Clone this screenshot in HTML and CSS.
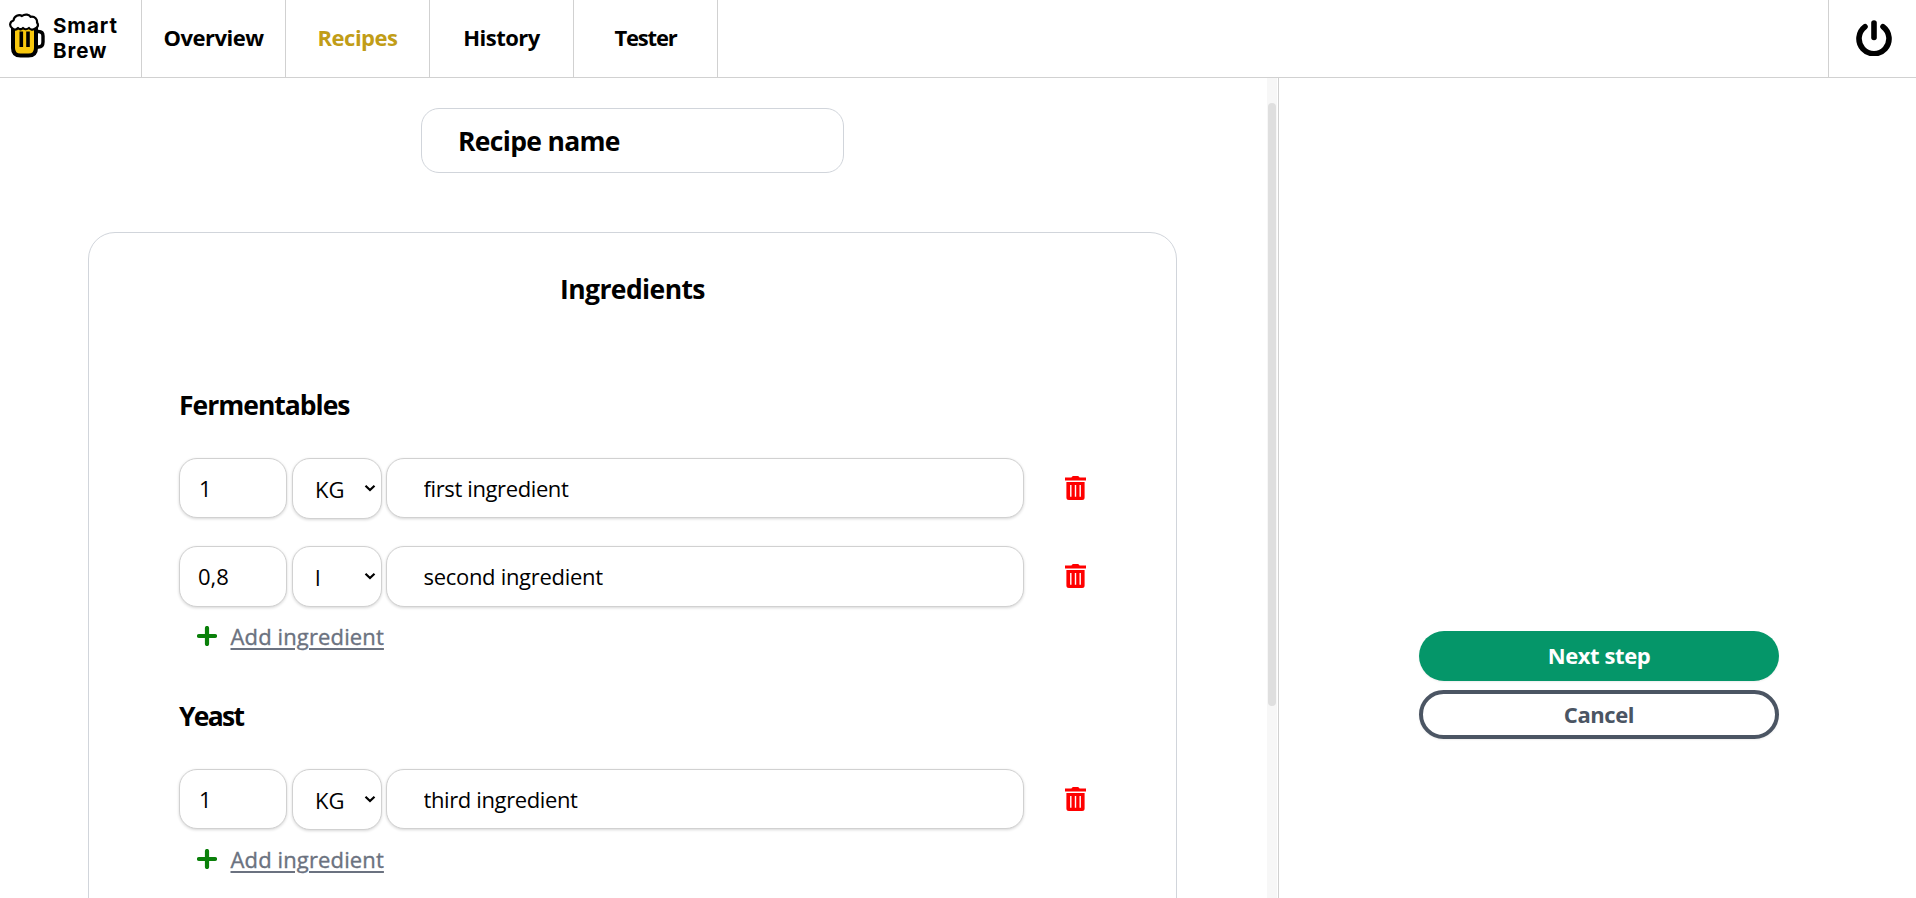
FILE: index.html
```html
<!DOCTYPE html>
<html lang="en">
<head>
<meta charset="utf-8">
<title>Smart Brew</title>
<link rel="stylesheet" href="styles.css">
</head>
<body>
<svg width="0" height="0" class="sprite" aria-hidden="true">
  <symbol id="trash" viewBox="0 0 21 24">
    <path fill="#f00" fill-rule="evenodd" d="M0 1.6h6.4L7.2.4Q7.500 0 8 0h5q.5 0 .8.400l.8 1.200H21v2.900H0zM1.400 6h18.200v15.500q0 2.500-2.500 2.500H3.900q-2.500 0-2.500-2.500zM5.100 9v11.800h1.400V9zM9.800 9v11.800h1.400V9zM14.500 9v11.800h1.400V9z"/>
  </symbol>
  <symbol id="plus" viewBox="0 0 20 20">
    <path d="M10 2v16M2 10h16" stroke="#0a800a" stroke-width="4.200" stroke-linecap="round"/>
  </symbol>
  <symbol id="chevron" viewBox="0 0 12 8">
    <path d="M1.500 1.700l4.500 4.300 4.500-4.300" fill="none" stroke="#000" stroke-width="2.200"/>
  </symbol>
</svg>

<header class="header">
  <a class="logo">
    <svg class="logo-icon" width="36" height="45" viewBox="0 0 36 45">
      <path d="M26 18.500h3.500q4.500 0 4.500 4.500v6q0 5-4.500 5H26" fill="#fff" stroke="#000" stroke-width="3.400"/>
      <path d="M4 13v22q0 7.500 7.500 7.500h8q7.500 0 7.500-7.500V13z" fill="#f9c80e" stroke="#000" stroke-width="4"/>
      <path d="M12.300 18.500v15.500M19 18.500v15.500" stroke="#000" stroke-width="3.600"/>
      <path d="M3.500 15.500C0 13.500.5 8.500 4.500 7.500 5 3 10 .8 13 3 16 .5 20.500 1.500 21.500 3.800 26 3 28.500 6.500 28 9.500 30 12 28.500 15 26 15.500 24 17.500 21 16.500 20 15 17.500 17 15 16 14 15 12 17 10 16 9 15 7.500 17 5 17 3.500 15.500z" fill="#fff" stroke="#000" stroke-width="2.200" stroke-linejoin="round"/>
    </svg>
    <span class="logo-text">Smart<br>Brew</span>
  </a>
  <nav class="nav">
    <a class="nav-item">Overview</a>
    <a class="nav-item nav-item-active">Recipes</a>
    <a class="nav-item">History</a>
    <a class="nav-item nav-item-tight">Tester</a>
  </nav>
  <button class="power" aria-label="Log out">
    <svg width="36" height="36" viewBox="0 0 36 36" fill="none" stroke="#000" stroke-linecap="round">
      <path d="M9 6.700A15 15 0 1 0 27 6.700" stroke-width="5.600"/>
      <path d="M18 3v14.500" stroke-width="5.600"/>
    </svg>
  </button>
</header>

<div class="layout">
  <main class="content">
    <input class="recipe-name" value="Recipe name" aria-label="Recipe name">
    <section class="card">
      <h2 class="card-title">Ingredients</h2>

      <div class="group">
        <h3 class="group-title">Fermentables</h3>
        <div class="rows">
          <div class="row">
            <input class="field amount amount-one" value="1">
            <div class="unit"><select class="field unit-select"><option>KG</option><option>l</option></select><svg class="chevron" width="12" height="8"><use href="#chevron"/></svg></div>
            <input class="field name" value="first ingredient">
            <svg class="trash" width="21" height="24"><use href="#trash"/></svg>
          </div>
          <div class="row">
            <input class="field amount" value="0,8">
            <div class="unit"><select class="field unit-select"><option>l</option><option>KG</option></select><svg class="chevron" width="12" height="8"><use href="#chevron"/></svg></div>
            <input class="field name name-loose" value="second ingredient">
            <svg class="trash" width="21" height="24"><use href="#trash"/></svg>
          </div>
        </div>
        <a class="add"><svg width="20" height="20"><use href="#plus"/></svg><span class="add-text">Add ingredient</span></a>
      </div>

      <div class="group">
        <h3 class="group-title group-title-tight">Yeast</h3>
        <div class="rows">
          <div class="row">
            <input class="field amount amount-one" value="1">
            <div class="unit"><select class="field unit-select"><option>KG</option><option>l</option></select><svg class="chevron" width="12" height="8"><use href="#chevron"/></svg></div>
            <input class="field name" value="third ingredient">
            <svg class="trash" width="21" height="24"><use href="#trash"/></svg>
          </div>
        </div>
        <a class="add"><svg width="20" height="20"><use href="#plus"/></svg><span class="add-text">Add ingredient</span></a>
      </div>
    </section>
  </main>
  <div class="track"><div class="thumb"></div></div>
  <aside class="side">
    <button class="btn btn-primary">Next step</button>
    <button class="btn btn-outline">Cancel</button>
  </aside>
</div>
</body>
</html>
```
FILE: styles.css
```css
* { box-sizing: border-box; }
body {
  margin: 0;
  height: 898px;
  overflow: hidden;
  display: flex;
  flex-direction: column;
  background: #fff;
  color: #000;
  font: 22px "Open Sans", "Noto Sans", sans-serif;
}
button, input, select { font: inherit; color: inherit; letter-spacing: inherit; margin: 0; }
svg { display: block; flex: none; }
.sprite { position: absolute; }

.header { display: flex; flex: none; height: 78px; border-bottom: 1px solid #d1d1d1; }
.logo { display: flex; width: 142px; padding: 13px 0 0 9px; border-right: 1px solid #d1d1d1; }
.logo-text {
  margin: 0 0 0 8px;
  font: 700 20.5px/25px Inter, sans-serif;
  letter-spacing: 0.9px;
}
.nav { display: flex; flex: 1; }
.nav-item {
  display: flex;
  align-items: center;
  justify-content: center;
  width: 144px;
  padding-bottom: 4px;
  border-right: 1px solid #d1d1d1;
  font-weight: 700;
  letter-spacing: -0.5px;
}
.nav-item-active { color: #c19d17; }
.nav-item-tight { letter-spacing: -1.2px; }
.power {
  width: 88px;
  padding: 0 0 2px 27px;
  border: 0;
  border-left: 1px solid #d1d1d1;
  background: none;
}

.layout { display: flex; flex: 1; min-height: 0; }
.content {
  display: flex;
  flex-direction: column;
  align-items: center;
  width: 1267px;
  padding: 30px 2px 0 0;
  overflow: hidden;
}
.recipe-name {
  flex: none;
  width: 423px;
  height: 65px;
  padding: 1px 36px 0;
  border: 1px solid #d1d5db;
  border-radius: 18px;
  background: #fff;
  font-size: 26.5px;
  font-weight: 700;
  letter-spacing: -0.68px;
}
.card {
  flex: none;
  width: 1089px;
  height: 1000px;
  margin-top: 59px;
  padding: 38px 90px 0;
  border: 1px solid #d1d5db;
  border-radius: 27px;
}
.card-title, .group-title { margin: 0; font-size: 26.5px; line-height: 36px; letter-spacing: -0.6px; }
.card-title { margin-bottom: 80px; text-align: center; }
.group { margin-bottom: 47px; }
.group-title { margin-bottom: 35px; letter-spacing: -1px; }
.group-title-tight { letter-spacing: -1.7px; }
.rows { display: grid; gap: 27px; }
.row { display: flex; height: 61px; }
.field {
  height: 61px;
  border: 1px solid #d1d1d1;
  border-radius: 18px;
  background: #fff;
  box-shadow: 0 1px 3px rgba(0, 0, 0, .16);
}
.amount { width: 108px; padding: 0 18px 1px; }
.amount-one { padding-left: 19px; }
.unit { position: relative; width: 90px; margin: 0 4px 0 5px; }
.unit-select { appearance: none; width: 90px; padding: 0 22px 0 22px; }
.chevron { position: absolute; right: 6px; top: 26px; pointer-events: none; }
.name { width: 638px; padding: 0 36.5px 1px; letter-spacing: -0.38px; }
.name-loose { letter-spacing: -0.3px; }
.row:first-child .amount, .row:first-child .name { height: 60px; }
.trash { margin: 18px 0 0 41px; }
.add { display: flex; align-items: center; height: 30px; margin-top: 14px; padding-left: 18px; color: #6b7280; }
.add-text {
  margin-left: 13.5px;
  letter-spacing: 0.13px;
  -webkit-text-stroke: 0.35px #6b7280;
  text-decoration: underline;
  text-decoration-thickness: 2px;
  text-underline-offset: 3px;
}

.track { width: 12px; padding: 25px 2px 0 1px; border-right: 1px solid #d1d1d1; background: linear-gradient(90deg, #f7f7f7 10px, #fff 10px); }
.thumb { height: 603px; border-radius: 5px; background: #dfdfdf; }

.side { display: flex; flex-direction: column; align-items: center; gap: 9px; flex: 1; padding: 553px 0 0 3px; }
.btn { width: 360px; padding: 0 0 2px; border-radius: 25px; font-weight: 700; letter-spacing: -0.4px; box-shadow: 0 1px 2px rgba(0, 0, 0, .07); }
.btn-primary { height: 50px; border: 0; background: #059669; color: #fff; }
.btn-outline { height: 49px; border: 4px solid #4b5563; background: #fff; color: #4b5563; }
```
